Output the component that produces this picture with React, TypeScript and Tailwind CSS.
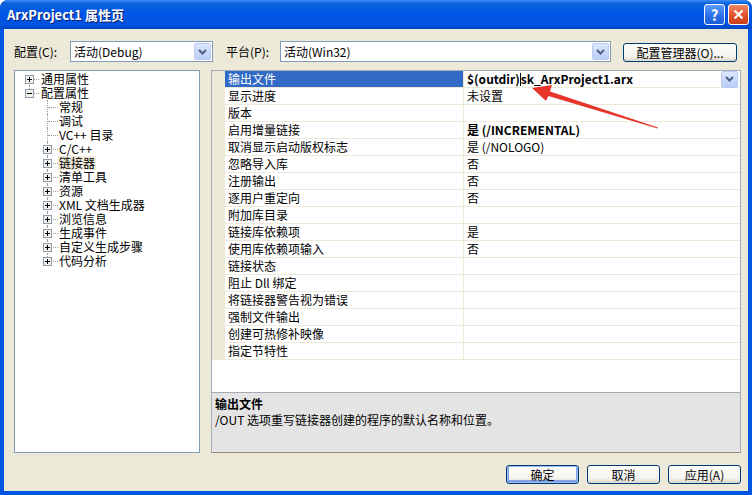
import React from "react";

const props: { name: string; value?: string; bold?: boolean }[] = [
  { name: "输出文件" },
  { name: "显示进度", value: "未设置" },
  { name: "版本" },
  { name: "启用增量链接", value: "是 (/INCREMENTAL)", bold: true },
  { name: "取消显示启动版权标志", value: "是 (/NOLOGO)" },
  { name: "忽略导入库", value: "否" },
  { name: "注册输出", value: "否" },
  { name: "逐用户重定向", value: "否" },
  { name: "附加库目录" },
  { name: "链接库依赖项", value: "是" },
  { name: "使用库依赖项输入", value: "否" },
  { name: "链接状态" },
  { name: "阻止 Dll 绑定" },
  { name: "将链接器警告视为错误" },
  { name: "强制文件输出" },
  { name: "创建可热修补映像" },
  { name: "指定节特性" },
];

const children: { label: string; leaf?: boolean; sel?: boolean }[] = [
  { label: "常规", leaf: true },
  { label: "调试", leaf: true },
  { label: "VC++ 目录", leaf: true },
  { label: "C/C++" },
  { label: "链接器", sel: true },
  { label: "清单工具" },
  { label: "资源" },
  { label: "XML 文档生成器" },
  { label: "浏览信息" },
  { label: "生成事件" },
  { label: "自定义生成步骤" },
  { label: "代码分析" },
];

const ExpandBox = ({ open }: { open?: boolean }) => (
  <svg width="9" height="9" viewBox="0 0 9 9" className="block">
    <rect x="0.5" y="0.5" width="8" height="8" fill="#F3F2EC" stroke="#8C9BAE" />
    <path d="M2 4.5h5" stroke="#000" />
    {!open && <path d="M4.5 2v5" stroke="#000" />}
  </svg>
);

const ComboArrow = () => (
  <div className="flex h-[17px] w-[17px] shrink-0 items-center justify-center rounded-[2px] border border-[#BACCF4] bg-[linear-gradient(to_bottom,#DCE7FC,#B9CDF7)]">
    <svg width="9" height="6" viewBox="0 0 9 6">
      <path d="M1 1l3.5 3.5L8 1" fill="none" stroke="#4D6185" strokeWidth="2" />
    </svg>
  </div>
);

const Combo = ({ text, className }: { text: string; className: string }) => (
  <div className={`flex h-[21px] items-center border border-[#7F9DB9] bg-white pl-[3px] pr-[1px] ${className}`}>
    <span className="flex-1 leading-[19px]">{text}</span>
    <ComboArrow />
  </div>
);

const XpButton = ({ label, className }: { label: string; className: string }) => (
  <button
    className={`h-[19px] rounded-[3px] border border-[#003C74] bg-[linear-gradient(to_bottom,#FFFFFF,#F4F3EE_70%,#DCD7CB)] leading-[17px] text-black ${className}`}
  >
    {label}
  </button>
);

function Tree() {
  return (
    <div className="w-[186px] shrink-0 border border-[#7F9DB9] bg-white pt-[1px]">
      {["通用属性", "配置属性"].map((t, i) => (
        <div key={t} className="flex h-[14px] items-center">
          <div className="relative h-full w-[25px] shrink-0">
            <span
              className={
                i === 0
                  ? "absolute left-[14px] top-[7px] h-[7px] border-l border-dotted border-[#A0A0A0]"
                  : "absolute left-[14px] top-0 h-[7px] border-l border-dotted border-[#A0A0A0]"
              }
            />
            <span className="absolute left-[15px] top-[7px] w-[9px] border-t border-dotted border-[#A0A0A0]" />
            <span className="absolute left-[10px] top-[3px]">
              <ExpandBox open={i === 1} />
            </span>
          </div>
          <span className="pl-[1px] leading-[14px]">{t}</span>
        </div>
      ))}
      {children.map((c, i) => (
        <div key={c.label} className="flex h-[14px] items-center">
          <div className="relative h-full w-[43px] shrink-0">
            <span
              className={
                i === children.length - 1
                  ? "absolute left-[32px] top-0 h-[7px] border-l border-dotted border-[#A0A0A0]"
                  : "absolute left-[32px] top-0 h-[14px] border-l border-dotted border-[#A0A0A0]"
              }
            />
            <span className="absolute left-[33px] top-[7px] w-[10px] border-t border-dotted border-[#A0A0A0]" />
            {!c.leaf && (
              <span className="absolute left-[28px] top-[3px]">
                <ExpandBox />
              </span>
            )}
          </div>
          <span className={c.sel ? "bg-[#ECE9D8] px-[1px] leading-[14px]" : "px-[1px] leading-[14px]"}>{c.label}</span>
        </div>
      ))}
    </div>
  );
}

function Grid() {
  return (
    <div className="flex h-[323px] flex-col border border-[#A5ACB5] bg-white">
      {props.map((p, i) => (
        <div key={p.name} className="flex h-[17px]">
          <div className="w-[13px] shrink-0 bg-[#ECE9D8]" />
          <div
            className={
              i === 0
                ? "w-[238px] shrink-0 border-b border-[#ECE9D8] bg-[#316AC5] pl-[3px] leading-[16px] text-white"
                : "w-[238px] shrink-0 border-b border-[#ECE9D8] pl-[3px] leading-[16px]"
            }
          >
            {p.name}
          </div>
          <div className="flex flex-1 items-center border-b border-l border-[#ECE9D8] pl-[3px]">
            {i === 0 ? (
              <>
                <span className="font-bold leading-[16px]">$(outdir)</span>
                <span className="h-[13px] w-px bg-black" />
                <span className="flex-1 font-bold leading-[16px]">sk_ArxProject1.arx</span>
                <span className="mr-[2px]">
                  <ComboArrow />
                </span>
              </>
            ) : (
              <span className={p.bold ? "font-bold leading-[16px]" : "leading-[16px]"}>{p.value}</span>
            )}
          </div>
        </div>
      ))}
    </div>
  );
}

export default function App() {
  return (
    <div className="relative flex h-[495px] w-[752px] flex-col overflow-hidden rounded-t-[8px] bg-[#0055E5] font-['Noto_Sans_CJK_SC',sans-serif] text-[12px] text-black">
      <div className="flex h-[29px] shrink-0 items-center bg-[linear-gradient(to_bottom,#3D8DF6_0%,#0A62DC_12%,#0056E6_45%,#0052E0_85%,#0045C4_100%)] pl-[7px] pr-[3px]">
        <span className="flex-1 text-[13px] font-bold leading-[16px] text-white [text-shadow:1px_1px_0_#0A1E6E]">
          ArxProject1 属性页
        </span>
        <div className="flex h-[21px] w-[21px] items-center justify-center rounded-[3px] border border-white bg-[linear-gradient(to_bottom,#5C9BFF,#2A6EE8_60%,#1D5BD6)] text-[15px] font-bold leading-none text-white">
          ?
        </div>
        <div className="ml-[3px] flex h-[21px] w-[21px] items-center justify-center rounded-[3px] border border-white bg-[linear-gradient(to_bottom,#F08A6A,#E0502A_55%,#C8401E)]">
          <svg width="11" height="11" viewBox="0 0 11 11">
            <path d="M1.5 1.5l8 8M9.5 1.5l-8 8" stroke="#fff" strokeWidth="2.2" />
          </svg>
        </div>
      </div>

      <div className="mx-[4px] mb-[4px] flex flex-1 flex-col bg-[#ECE9D8] pl-[10px] pr-[7px] pt-[12px]">
        <div className="flex h-[21px] items-center">
          <span className="w-[56px] shrink-0">配置(C):</span>
          <Combo text="活动(Debug)" className="w-[143px] shrink-0" />
          <span className="ml-[13px] w-[54px] shrink-0">平台(P):</span>
          <Combo text="活动(Win32)" className="w-[331px] shrink-0" />
          <XpButton label="配置管理器(O)..." className="ml-[12px] mt-[2px] w-[114px] shrink-0" />
        </div>

        <div className="mt-[8px] flex h-[383px] gap-[11px]">
          <Tree />
          <div className="flex flex-1 flex-col">
            <Grid />
            <div className="mt-[-1px] flex-1 border border-[#A5ACB5] border-b-[#8E8C80] bg-[#E4E4E4] px-[3px] pt-[3px] leading-[16px]">
              <div className="font-bold">输出文件</div>
              <div>/OUT 选项重写链接器创建的程序的默认名称和位置。</div>
            </div>
          </div>
        </div>

        <div className="mt-[12px] flex justify-end gap-[8px] pr-[-1px]">
          <XpButton
            label="确定"
            className="w-[73px] shadow-[inset_0_0_0_1px_#9DBBF0,inset_0_-1px_0_2px_#7FA3E6]"
          />
          <XpButton label="取消" className="w-[73px]" />
          <XpButton label="应用(A)" className="w-[73px]" />
        </div>
      </div>

      <svg className="pointer-events-none absolute left-0 top-0" width="752" height="495" viewBox="0 0 752 495">
        <polygon
          points="532,88 552,85 550,91.5 658,127.4 657.6,128.6 548.4,95.9 546,101"
          fill="#E8352C"
        />
      </svg>
    </div>
  );
}
